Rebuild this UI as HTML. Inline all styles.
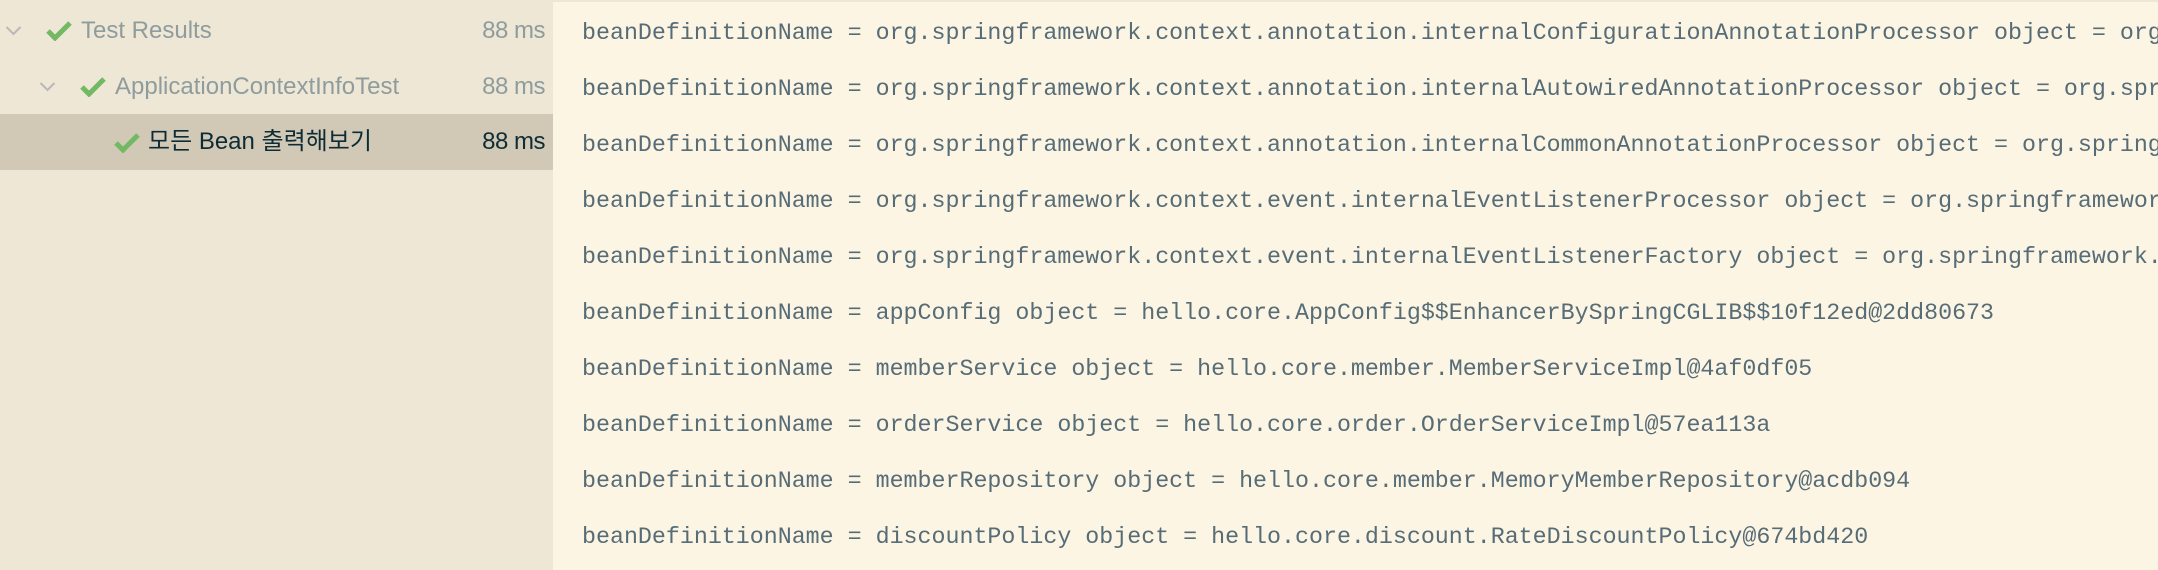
<!DOCTYPE html>
<html><head><meta charset="utf-8"><style>
html,body{margin:0;padding:0;width:2158px;height:570px;overflow:hidden;background:#eee7d6;}
.left{position:absolute;left:0;top:0;width:553px;height:570px;background:#eee7d6;font-family:"Liberation Sans","Noto Sans CJK KR",sans-serif;font-size:24px;}
.row{position:absolute;left:0;width:553px;height:56px;}
.row .t{position:absolute;top:13px;line-height:30px;height:30px;white-space:nowrap;color:#8f9c9d;}
.row .ms{position:absolute;right:8px;top:13px;line-height:30px;color:#8f9c9d;letter-spacing:-0.5px;}
.sel{background:#d1c9b6;}
.sel .t,.sel .ms{color:#0e2c36;}
svg{position:absolute;}
.right{position:absolute;left:553px;top:2px;right:0;bottom:0;background:#fcf5e4;font-family:"Liberation Mono",monospace;font-size:23.3px;color:#566c76;overflow:hidden;}
.l{position:absolute;left:29px;white-space:pre;}
</style></head><body>
<div class="left">
 <div class="row" style="top:3px">
  <svg style="left:5px;top:22px" width="17" height="11" viewBox="0 0 17 11"><path d="M1.5 2 L8.5 9 L15.5 2" fill="none" stroke="#b8b8b8" stroke-width="2"/></svg>
  <svg style="left:46px;top:18px" width="26" height="20" viewBox="0 0 26 20"><path d="M2 10 L9 17 L24 2" fill="none" stroke="#73b862" stroke-width="5"/></svg>
  <span class="t" style="left:81px">Test Results</span><span class="ms">88 ms</span>
 </div>
 <div class="row" style="top:59px">
  <svg style="left:39px;top:22px" width="17" height="11" viewBox="0 0 17 11"><path d="M1.5 2 L8.5 9 L15.5 2" fill="none" stroke="#b8b8b8" stroke-width="2"/></svg>
  <svg style="left:80px;top:18px" width="26" height="20" viewBox="0 0 26 20"><path d="M2 10 L9 17 L24 2" fill="none" stroke="#73b862" stroke-width="5"/></svg>
  <span class="t" style="left:115px">ApplicationContextInfoTest</span><span class="ms">88 ms</span>
 </div>
 <div class="row sel" style="top:114px">
  <svg style="left:114px;top:19px" width="26" height="20" viewBox="0 0 26 20"><path d="M2 10 L9 17 L24 2" fill="none" stroke="#73b862" stroke-width="5"/></svg>
  <span class="t" style="left:148px">모든 Bean 출력해보기</span><span class="ms">88 ms</span>
 </div>
</div>
<div class="right">
<div class="l" style="top:18px">beanDefinitionName = org.springframework.context.annotation.internalConfigurationAnnotationProcessor object = org.springframework</div>
<div class="l" style="top:74px">beanDefinitionName = org.springframework.context.annotation.internalAutowiredAnnotationProcessor object = org.springframework</div>
<div class="l" style="top:130px">beanDefinitionName = org.springframework.context.annotation.internalCommonAnnotationProcessor object = org.springframework</div>
<div class="l" style="top:186px">beanDefinitionName = org.springframework.context.event.internalEventListenerProcessor object = org.springframework.context</div>
<div class="l" style="top:242px">beanDefinitionName = org.springframework.context.event.internalEventListenerFactory object = org.springframework.context</div>
<div class="l" style="top:298px">beanDefinitionName = appConfig object = hello.core.AppConfig$$EnhancerBySpringCGLIB$$10f12ed@2dd80673</div>
<div class="l" style="top:354px">beanDefinitionName = memberService object = hello.core.member.MemberServiceImpl@4af0df05</div>
<div class="l" style="top:410px">beanDefinitionName = orderService object = hello.core.order.OrderServiceImpl@57ea113a</div>
<div class="l" style="top:466px">beanDefinitionName = memberRepository object = hello.core.member.MemoryMemberRepository@acdb094</div>
<div class="l" style="top:522px">beanDefinitionName = discountPolicy object = hello.core.discount.RateDiscountPolicy@674bd420</div>
</div>
</body></html>
